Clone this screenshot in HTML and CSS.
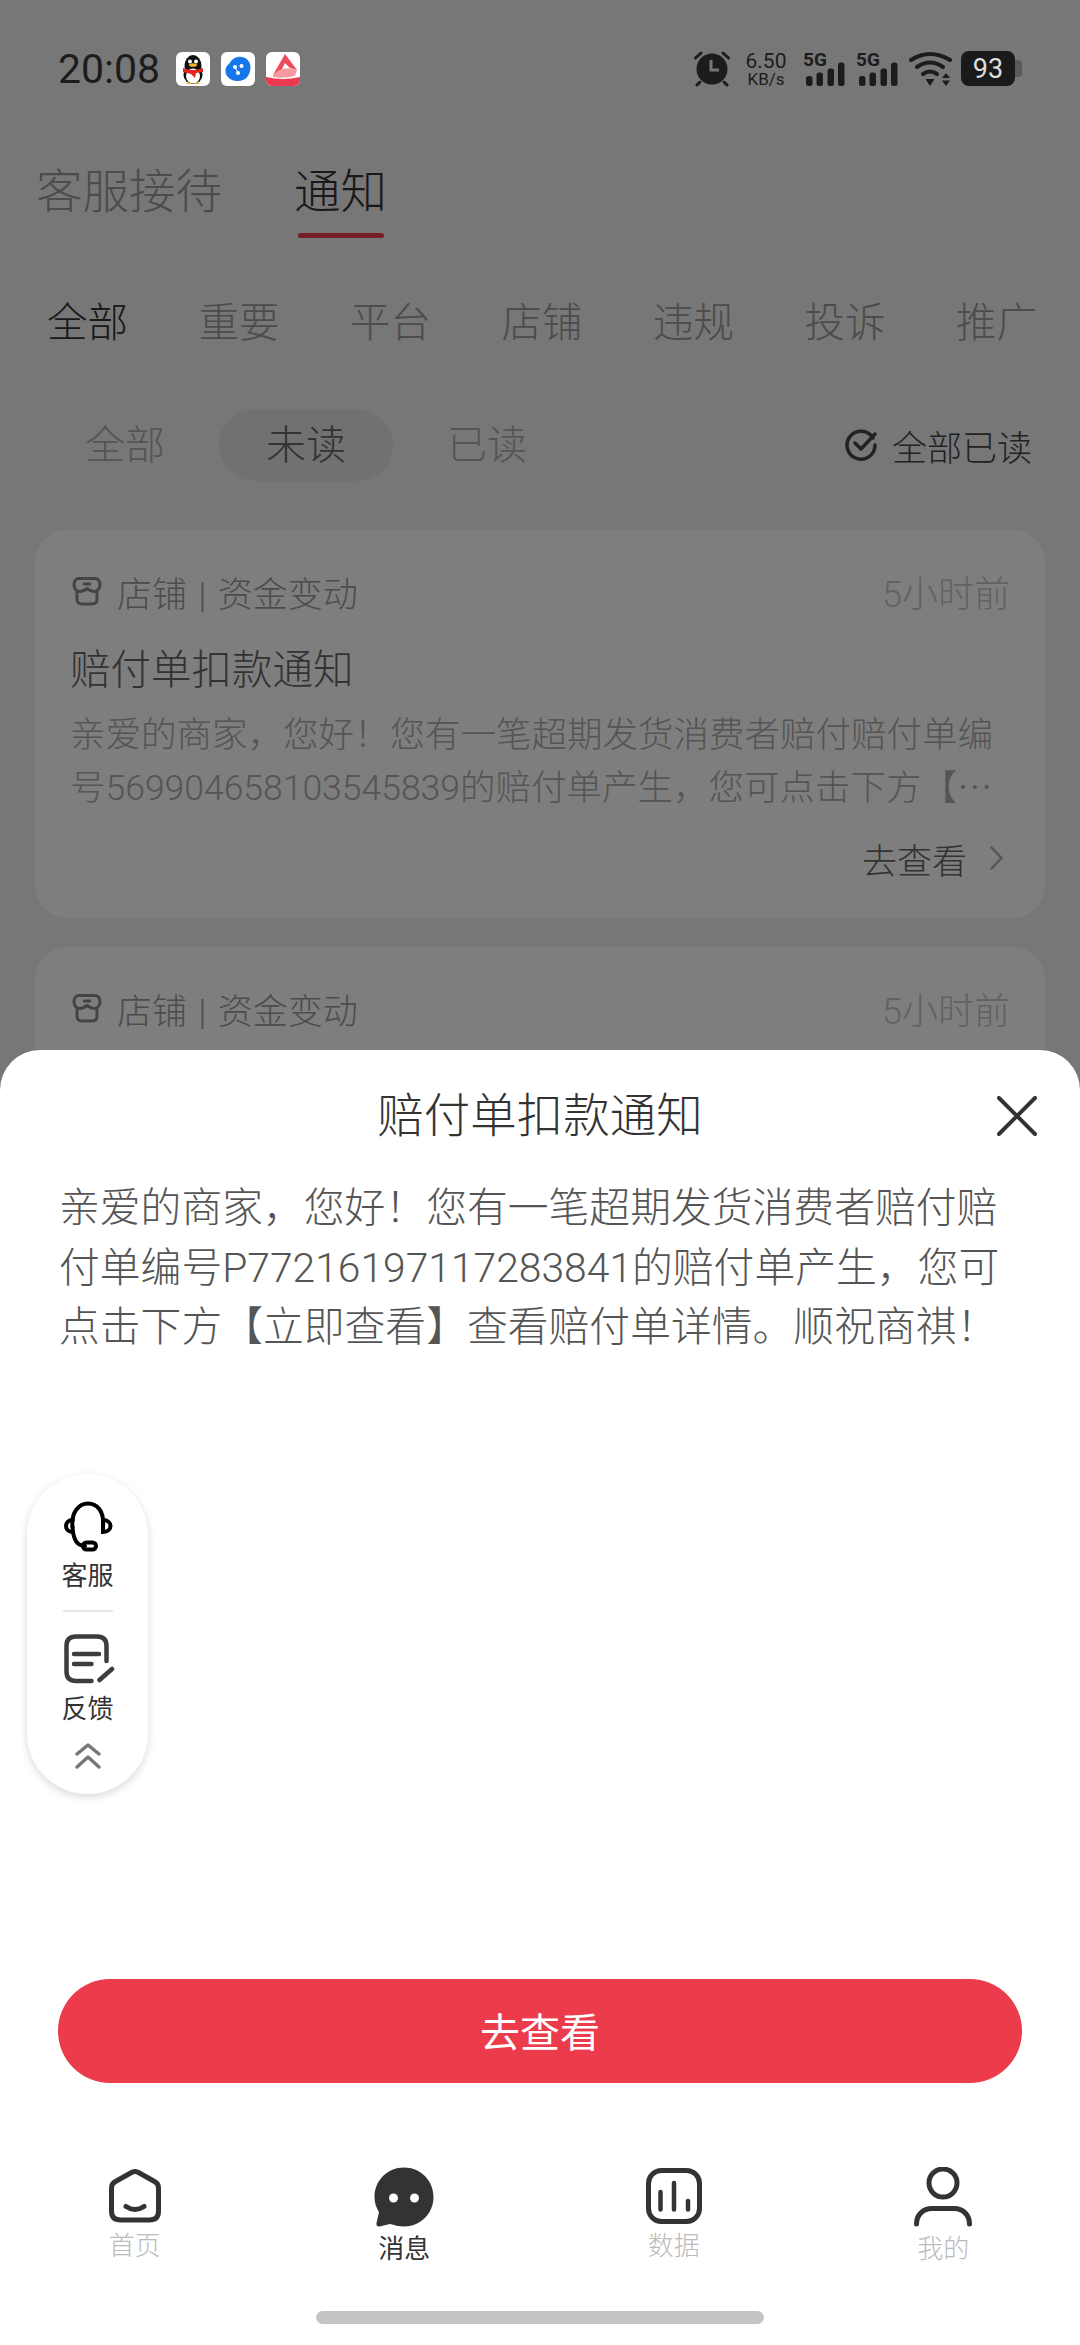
FILE: index.html
```html
<!DOCTYPE html>
<html lang="zh-CN">
<head>
    <meta charset="UTF-8">
    <meta name="viewport" content="width=device-width, initial-scale=1.0">
    <title>通知</title>
    <link rel="stylesheet" href="styles.css">
</head>
<body>
    <div class="status-bar">
        <div class="status-left">
            <span class="time">20:08</span>
            <svg class="app-icon" viewBox="0 0 34 34">
                <rect width="34" height="34" rx="6" fill="#fff"/>
                <ellipse cx="17" cy="14" rx="8.500" ry="11" fill="#111"/>
                <ellipse cx="17" cy="23" rx="9.500" ry="9" fill="#111"/>
                <ellipse cx="17" cy="24" rx="7" ry="7.500" fill="#fff"/>
                <circle cx="14" cy="9.500" r="2" fill="#fff"/>
                <circle cx="20" cy="9.500" r="2" fill="#fff"/>
                <ellipse cx="17" cy="13" rx="4" ry="1.800" fill="#f3b32a"/>
                <path d="M7 16 Q17 20 27 16 L27 20 L20 21 L19 26 L15 22 L7 20 Z" fill="#e5261f"/>
                <path d="M10 32 H16 L13 30 Z M18 32 H24 L21 30 Z" fill="#f3b32a"/>
            </svg>
            <svg class="app-icon" viewBox="0 0 34 34">
                <rect width="34" height="34" rx="6" fill="#fff"/>
                <path d="M17 5 C24 4 30 9 29.500 16 C29 24 24 29.500 16 29 C9 28.500 4 24 4.500 18 C5 14 7 13 9 10.500 C11 7.500 13 5.500 17 5 Z" fill="#1677ea"/>
                <circle cx="14" cy="15" r="2" fill="#fff"/>
                <circle cx="20.500" cy="14" r="2" fill="#fff"/>
                <circle cx="17" cy="21" r="2" fill="#fff"/>
                <path d="M14 15 L17 21" stroke="#fff" stroke-width="1"/>
            </svg>
            <svg class="app-icon" viewBox="0 0 34 34">
                <rect width="34" height="34" rx="6" fill="#fff"/>
                <path d="M0 25 Q17 29 34 25 V28 A6 6 0 0 1 28 34 H6 A6 6 0 0 1 0 28 Z" fill="#ea3a50"/>
                <path d="M19 2 L31 18 L24 16 L19 11 L15 19 L7 23 Z" fill="#ee4a58"/>
                <path d="M7 23 Q16 13 31 18 L29 24 Q18 27 7 25 Z" fill="#f69aa0"/>
            </svg>
        </div>
        <div class="status-right">
            <svg class="alarm" viewBox="0 0 36 36">
                <path d="M1.500 7 L7 2 M34.500 7 L29 2 M6 31 L3 34 M30 31 L33 34" stroke="#1c1c1c" stroke-width="3" stroke-linecap="round"/>
                <circle cx="18" cy="18" r="15.500" fill="#1c1c1c"/>
                <path d="M17 9 V19 H25" fill="none" stroke="#777" stroke-width="3"/>
            </svg>
            <div class="speed">
                <span class="speed-num">6.50</span>
                <span class="speed-unit">KB/s</span>
            </div>
            <svg class="signal" viewBox="0 0 42 36">
                <text class="signal-text" x="0" y="15">5G</text>
                <rect x="3" y="25" width="6.500" height="10" rx="2.500"/>
                <rect x="13.500" y="21.500" width="6.500" height="13.500" rx="2.500"/>
                <rect x="24.500" y="17.500" width="6.500" height="17.500" rx="2.500"/>
                <rect x="35" y="11.500" width="6.500" height="23.500" rx="2.500"/>
            </svg>
            <svg class="signal" viewBox="0 0 42 36">
                <text class="signal-text" x="0" y="15">5G</text>
                <rect x="3" y="25" width="6.500" height="10" rx="2.500"/>
                <rect x="13.500" y="21.500" width="6.500" height="13.500" rx="2.500"/>
                <rect x="24.500" y="17.500" width="6.500" height="17.500" rx="2.500"/>
                <rect x="35" y="11.500" width="6.500" height="23.500" rx="2.500"/>
            </svg>
            <svg class="wifi" viewBox="0 0 44 36">
                <g fill="none" stroke="#1c1c1c" stroke-width="4" stroke-linecap="round">
                    <path d="M2 9 Q21 -3 41 9"/>
                    <path d="M8 16 Q21 7 34 16"/>
                    <path d="M14 23 Q21 18 28 23"/>
                </g>
                <path d="M16.500 28 H25.500 L21 35 Z M33 27 H41 L37 22 Z M33 29.500 H41 L37 35 Z" fill="#1c1c1c"/>
            </svg>
            <div class="battery">
                <span class="battery-num">93</span>
            </div>
        </div>
    </div>

    <div class="page">
        <div class="main-tabs">
            <div class="main-tab">客服接待</div>
            <div class="main-tab active">通知</div>
        </div>

        <div class="filter-row">
            <span class="filter active">全部</span>
            <span class="filter">重要</span>
            <span class="filter">平台</span>
            <span class="filter">店铺</span>
            <span class="filter">违规</span>
            <span class="filter">投诉</span>
            <span class="filter">推广</span>
        </div>

        <div class="read-row">
            <span class="read-item">全部</span>
            <span class="read-item active">未读</span>
            <span class="read-item">已读</span>
            <div class="read-all">
                <svg class="check-icon" viewBox="0 0 32 32">
                    <path d="M28 9 A14 14 0 1 0 30 16" fill="none" stroke="#444" stroke-width="3.500" stroke-linecap="round"/>
                    <path d="M10 14 L16 20 L30 5" fill="none" stroke="#444" stroke-width="3.500" stroke-linecap="round" stroke-linejoin="round"/>
                </svg>
                <span>全部已读</span>
            </div>
        </div>

        <div class="card">
            <div class="card-head">
                <svg class="shop-icon" viewBox="0 0 30 30">
                    <g fill="none" stroke="#888" stroke-width="3" stroke-linejoin="round">
                        <path d="M7 2.500 H23 C26 2.500 28 5 28 9 C28 13 25 15.500 22 15.500 C19 15.500 17 14 15 12.500 C13 14 11 15.500 8 15.500 C5 15.500 2 13 2 9 C2 5 4 2.500 7 2.500 Z"/>
                        <path d="M5 15.500 V23 Q5 28 10 28 H20 Q25 28 25 23 V15.500"/>
                        <path d="M11 8 H19"/>
                    </g>
                </svg>
                <span class="card-type">店铺 | 资金变动</span>
                <span class="card-time">5小时前</span>
            </div>
            <div class="card-title">赔付单扣款通知</div>
            <div class="card-text">亲爱的商家，您好！您有一笔超期发货消费者赔付赔付单编号<span class="num">569904658103545839</span>的赔付单产生，您可点击下方【立即查看】查看赔付单详情。顺祝商祺！</div>
            <div class="card-foot">
                <span>去查看</span>
                <svg class="chevron" viewBox="0 0 13 24">
                    <path d="M1.500 1.500 L11.500 12 L1.500 22.500" fill="none" stroke="#aaa" stroke-width="2.500" stroke-linecap="round" stroke-linejoin="round"/>
                </svg>
            </div>
        </div>

        <div class="card">
            <div class="card-head">
                <svg class="shop-icon" viewBox="0 0 30 30">
                    <g fill="none" stroke="#888" stroke-width="3" stroke-linejoin="round">
                        <path d="M7 2.500 H23 C26 2.500 28 5 28 9 C28 13 25 15.500 22 15.500 C19 15.500 17 14 15 12.500 C13 14 11 15.500 8 15.500 C5 15.500 2 13 2 9 C2 5 4 2.500 7 2.500 Z"/>
                        <path d="M5 15.500 V23 Q5 28 10 28 H20 Q25 28 25 23 V15.500"/>
                        <path d="M11 8 H19"/>
                    </g>
                </svg>
                <span class="card-type">店铺 | 资金变动</span>
                <span class="card-time">5小时前</span>
            </div>
        </div>
    </div>

    <div class="overlay"></div>

    <div class="sheet">
        <div class="sheet-title">赔付单扣款通知</div>
        <svg class="close-icon" viewBox="0 0 40 40">
            <path d="M2 2 L38 38 M38 2 L2 38" stroke="#333" stroke-width="4" stroke-linecap="round"/>
        </svg>
        <div class="sheet-text">亲爱的商家，您好！您有一笔超期发货消费者赔付赔付单编号P77216197117283841的赔付单产生，您可点击下方【立即查看】查看赔付单详情。顺祝商祺！</div>
        <button class="go-button">去查看</button>
        <div class="bottom-nav">
            <div class="nav-item short">
                <div class="nav-icon">
                    <svg width="52" height="54" viewBox="0 0 52 54">
                        <path d="M22.500 3.500 Q26 1.500 29.500 3.500 L45.500 12.500 Q49.500 14.500 49.500 19 V42 Q49.500 51 40.500 51 H11.500 Q2.500 51 2.500 42 V19 Q2.500 14.500 6.500 12.500 Z" fill="none" stroke="#333" stroke-width="5" stroke-linejoin="round"/>
                        <path d="M17 37.500 Q26 43.500 35 37.500" fill="none" stroke="#333" stroke-width="5" stroke-linecap="round"/>
                    </svg>
                </div>
                <span class="nav-label">首页</span>
            </div>
            <div class="nav-item active">
                <div class="nav-icon">
                    <svg width="60" height="60" viewBox="0 0 60 60">
                        <path d="M30 0.500 C46.500 0.500 59.500 13.500 59.500 30 C59.500 46.500 46.500 59.500 30 59.500 C25 59.500 20 58 16 57 L5.500 59.500 Q2 60 2.500 56 L5 45 C2 40.500 0.500 35.500 0.500 30 C0.500 13.500 13.500 0.500 30 0.500 Z" fill="#333"/>
                        <circle cx="19.500" cy="31" r="4.500" fill="#fff"/>
                        <circle cx="40.500" cy="31" r="4.500" fill="#fff"/>
                    </svg>
                </div>
                <span class="nav-label">消息</span>
            </div>
            <div class="nav-item short">
                <div class="nav-icon">
                    <svg width="56" height="56" viewBox="0 0 56 56">
                        <rect x="2.500" y="2.500" width="51" height="51" rx="13" fill="none" stroke="#333" stroke-width="5"/>
                        <path d="M14.500 24 V41.500 M28 15 V41.500 M42 33 V41.500" stroke="#333" stroke-width="4.500" stroke-linecap="round"/>
                    </svg>
                </div>
                <span class="nav-label">数据</span>
            </div>
            <div class="nav-item">
                <div class="nav-icon">
                    <svg width="58" height="60" viewBox="0 0 58 60">
                        <circle cx="29" cy="16" r="14" fill="none" stroke="#333" stroke-width="5"/>
                        <path d="M2.500 57 C2.500 48 9 41.500 18 41.500 H40 C49 41.500 55.500 48 55.500 57" fill="none" stroke="#333" stroke-width="5" stroke-linecap="round"/>
                    </svg>
                </div>
                <span class="nav-label">我的</span>
            </div>
        </div>
        <div class="home-bar"></div>
    </div>

    <div class="float-pill">
        <svg class="float-icon" viewBox="0 0 54 54">
            <g fill="none" stroke="#000" stroke-width="4" stroke-linecap="round">
                <path d="M11.500 27 C10 12 18 3.500 27 3.500 C36 3.500 43.500 11 42 27"/>
                <path d="M11.500 27 C12 37 15 46 24 46"/>
                <path d="M12 20 C7 20 5 23 5 26 C5 29 7 32 12 32"/>
                <path d="M42 20 C47 20 49.500 23 49.500 26 C49.500 29 47 32 42 32 Z"/>
                <rect x="22" y="42.500" width="13" height="7" rx="3.500"/>
            </g>
        </svg>
        <span class="float-label">客服</span>
        <div class="float-line"></div>
        <svg class="float-icon tall" viewBox="0 0 54 58">
            <g fill="none" stroke="#3d3d3d" stroke-width="4.500" stroke-linecap="round">
                <path d="M30.500 52 H15 Q5.500 52 5.500 42.500 V17 Q5.500 7.500 15 7.500 H36 Q45.500 7.500 45.500 17 V32"/>
                <path d="M13 25 H38 M13 35 H30.500"/>
                <path d="M38.500 51 L51 40"/>
            </g>
        </svg>
        <span class="float-label">反馈</span>
        <svg class="float-more" viewBox="0 0 28 28">
            <path d="M3 12 L14 3 L25 12 M3 25 L14 15 L25 25" fill="none" stroke="#777" stroke-width="3.500" stroke-linecap="round" stroke-linejoin="round"/>
        </svg>
    </div>
</body>
</html>
```

FILE: styles.css
```css
body {
    font-family: Roboto, "Noto Sans CJK SC", sans-serif;
    font-weight: 300;
    margin: 0;
    padding: 0;
    width: 1080px;
    height: 2345px;
    position: relative;
    overflow: hidden;
    background-color: #eee;
}

/* status bar is not dimmed by the overlay */
.status-bar {
    position: relative;
    z-index: 3;
    height: 120px;
    box-sizing: border-box;
    padding: 51px 65px 0 58px;
    display: flex;
    justify-content: space-between;
    align-items: flex-start;
    color: #1c1c1c;
    font-weight: 400;
}

.status-left {
    display: flex;
    align-items: center;
    height: 35px;
    gap: 11px;
}

.time {
    font-size: 41px;
    line-height: 36px;
    margin-right: 5px;
}

.app-icon {
    width: 34px;
    height: 34px;
}

.status-right {
    display: flex;
    align-items: flex-start;
    height: 36px;
}

.alarm {
    width: 36px;
    height: 36px;
    margin-right: 15px;
}

.speed {
    width: 42px;
    margin-right: 16px;
    display: flex;
    flex-direction: column;
    align-items: center;
}

.speed-num {
    font-size: 21px;
    line-height: 20px;
}

.speed-unit {
    font-size: 17px;
    line-height: 17px;
}

.signal {
    width: 42px;
    height: 36px;
    margin-right: 11px;
    fill: #1c1c1c;
    overflow: visible;
}

.signal-text {
    font-size: 19px;
    font-weight: 700;
}

.wifi {
    width: 44px;
    height: 36px;
    margin-right: 8px;
}

.battery {
    width: 54px;
    height: 35px;
    border-radius: 8px;
    background-color: #1a1a1a;
    display: flex;
    align-items: center;
    justify-content: center;
    position: relative;
    color: #ddd;
    font-size: 27px;
}

.battery::after {
    content: "";
    position: absolute;
    right: -7px;
    top: 9px;
    width: 7px;
    height: 17px;
    border-radius: 0 4px 4px 0;
    background-color: #5a5a5a;
}

.main-tabs {
    display: flex;
    gap: 72px;
    padding: 0 36px;
    margin-top: 42px;
    height: 133px;
    box-sizing: border-box;
    font-size: 46.500px;
    line-height: 60px;
    color: #999;
}

.main-tab.active {
    color: #333;
}

.main-tab.active::after {
    content: "";
    display: block;
    width: 86px;
    height: 5px;
    margin: 11px auto 0;
    border-radius: 3px;
    background-color: #ec3b4b;
}

.filter-row {
    display: flex;
    gap: 70.500px;
    padding-left: 47px;
    height: 115px;
    font-size: 40.500px;
    line-height: 56px;
    color: #999;
}

.filter.active {
    color: #333;
}

.read-row {
    display: flex;
    align-items: center;
    gap: 7px;
    height: 72px;
    padding: 0 48px 0 38px;
    margin-top: -1px;
    font-size: 40px;
    color: #aaa;
}

.read-item {
    height: 72px;
    line-height: 74px;
    padding: 0 47px;
    border-radius: 36px;
}

.read-item.active {
    color: #666;
    background-color: #e2e2e2;
}

.read-all {
    margin-left: auto;
    display: flex;
    align-items: center;
    gap: 15px;
    font-size: 35px;
    color: #444;
}

.check-icon {
    width: 32px;
    height: 32px;
}

.card {
    margin: 49px 35px 0;
    padding: 41px 35px 32px;
    height: 388px;
    box-sizing: border-box;
    border-radius: 32px;
    background-color: #fdfdfd;
}

.card + .card {
    margin-top: 29px;
}

.card-head {
    display: flex;
    align-items: center;
    height: 40px;
    font-size: 35px;
    word-spacing: 3px;
    color: #999;
}

.shop-icon {
    width: 30px;
    height: 30px;
    margin: 0 15px 0 2px;
}

.card-time {
    margin-left: auto;
    font-size: 36px;
    color: #c4c4c4;
}

.card-title {
    margin-top: 31px;
    font-size: 40.500px;
    line-height: 56px;
    color: #666;
}

.card-text {
    margin-top: 7px;
    font-family: "Noto Sans CJK SC", sans-serif;
    font-size: 35.500px;
    line-height: 53px;
    color: #aaa;
    display: -webkit-box;
    -webkit-box-orient: vertical;
    -webkit-line-clamp: 2;
    overflow: hidden;
}

.num {
    font-family: Roboto, sans-serif;
    line-height: 1;
}

.card-foot {
    margin: 22px 7px 0 0;
    height: 50px;
    display: flex;
    align-items: center;
    justify-content: flex-end;
    gap: 23px;
    font-size: 35px;
    color: #666;
}

.chevron {
    width: 13px;
    height: 24px;
}

.overlay {
    position: absolute;
    top: 0;
    left: 0;
    right: 0;
    bottom: 0;
    z-index: 1;
    background-color: rgba(0, 0, 0, 0.5);
}

.sheet {
    position: absolute;
    top: 1050px;
    left: 0;
    right: 0;
    bottom: 0;
    z-index: 2;
    display: flex;
    flex-direction: column;
    border-radius: 40px 40px 0 0;
    background-color: white;
}

.sheet-title {
    margin-top: 36px;
    text-align: center;
    font-size: 46.500px;
    line-height: 60px;
    color: #333;
}

.close-icon {
    position: absolute;
    top: 46px;
    right: 43px;
    width: 40px;
    height: 40px;
}

.sheet-text {
    flex: 1;
    margin-top: 33px;
    padding: 0 59px;
    font-size: 40.800px;
    line-height: 59.500px;
    color: #555;
}

.go-button {
    margin: 0 58px;
    height: 104px;
    padding: 0 0 3px;
    border: none;
    border-radius: 52px;
    background-color: #ec3b4b;
    color: white;
    font-family: inherit;
    font-weight: 400;
    font-size: 40px;
}

.bottom-nav {
    margin-top: 84px;
    display: grid;
    grid-template-columns: repeat(4, 269.500px);
}

.nav-item {
    display: flex;
    flex-direction: column;
    align-items: center;
    height: 98px;
    font-size: 26px;
    color: #bbb;
}

.nav-icon {
    height: 60px;
    display: flex;
    align-items: center;
    justify-content: center;
}

.nav-item.short .nav-icon {
    height: 57px;
}

.nav-label {
    margin-top: 6px;
    line-height: 32px;
}

.nav-item.active {
    color: #333;
    font-weight: 400;
}

.home-bar {
    width: 448px;
    height: 13px;
    margin: 46px auto 21px;
    border-radius: 7px;
    background-color: #c4c4c4;
}

.float-pill {
    position: absolute;
    top: 1474px;
    left: 27px;
    z-index: 2;
    width: 121px;
    box-sizing: border-box;
    padding: 26px 0 24px;
    display: flex;
    flex-direction: column;
    align-items: center;
    border-radius: 61px;
    background-color: white;
    box-shadow: 0 3px 8px rgba(0, 0, 0, 0.15);
}

.float-icon {
    width: 54px;
    height: 54px;
}

.float-icon.tall {
    height: 58px;
    margin-top: 17px;
}

.float-label {
    margin-top: 4px;
    font-size: 26px;
    font-weight: 400;
    line-height: 36px;
    color: #333;
}

.float-line {
    width: 50px;
    height: 2px;
    margin-top: 16px;
    background-color: #e5e5e5;
}

.float-more {
    width: 28px;
    height: 28px;
    margin-top: 15px;
}
```
